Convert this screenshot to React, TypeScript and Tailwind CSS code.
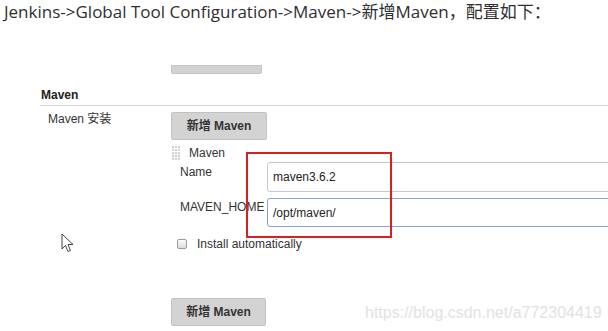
export default function App() {
  const sans = { fontFamily: '"Liberation Sans", "Noto Sans CJK SC", sans-serif' };

  return (
    <div className="relative w-[608px] h-[331px] overflow-hidden bg-white text-[#333]" style={sans}>
      {/* Article sentence above the screenshot */}
      <div
        className="pl-[4px] text-[17px] leading-[24px] text-[#2f2f2f] whitespace-nowrap"
        style={{ fontFamily: '"Open Sans", "Noto Sans CJK SC", sans-serif' }}
      >
        Jenkins-&gt;Global Tool Configuration-&gt;Maven-&gt;新增Maven，配置如下：
      </div>

      {/* Leftover button bottom from previous section */}
      <div className="ml-[171px] mt-[41px] w-[91px] h-[9px] bg-[#d2d2d2] border border-[#c4c4c4] rounded-b-[2px]" />

      {/* Section header */}
      <div className="ml-[40px] mt-[13px] pl-[1px] pb-[2px] border-b border-[#d6d6d6] text-[12px] leading-[16px] font-bold text-[#222]">
        Maven
      </div>

      <div className="flex">
        <div className="w-[123px] shrink-0 ml-[48px] pt-[5px] text-[12px] leading-[16px] text-[#333]">Maven 安装</div>

        <div className="flex flex-col shrink-0">
          <button className="mt-[6px] w-[96px] h-[28px] bg-[#d3d3d3] border border-[#c2c2c2] rounded-[2px] text-[12px] leading-[16px] font-bold text-[#333] flex items-center justify-center">
            新增 Maven
          </button>

          <div className="mt-[5px] h-[16px] flex items-center gap-[8px] pl-[1px] text-[12px] leading-[16px]">
            <svg width="9" height="14" viewBox="0 0 9 14" className="shrink-0">
              {[0, 3, 6].map((x) =>
                [0, 3, 6, 9, 12].map((y) => (
                  <rect key={`${x}-${y}`} x={x} y={y} width="2" height="2" fill="#cfcfcf" />
                ))
              )}
            </svg>
            <span className="text-[#333]">Maven</span>
          </div>

          {/* Fields */}
          <div className="mt-[1px] flex flex-col gap-[6px]">
            <div className="flex items-start">
              <div className="w-[96px] shrink-0 pl-[9px] pt-[2px] text-[12px] leading-[16px]">Name</div>
              <div className="w-[360px] shrink-0 h-[30px] border border-[#c6c6c6] rounded-[3px] flex items-center pl-[5px] text-[12px] text-[#222]">
                maven3.6.2
              </div>
            </div>
            <div className="flex items-start">
              <div className="w-[96px] shrink-0 pl-[9px] pt-[1px] text-[12px] leading-[16px] whitespace-nowrap">MAVEN_HOME</div>
              <div className="w-[360px] shrink-0 h-[29px] border border-[#8c9edb] rounded-[3px] flex items-center pl-[5px] text-[12px] text-[#222]">
                /opt/maven/
              </div>
            </div>
          </div>

          <div className="mt-[10px] flex items-center gap-[10px] pl-[6px] text-[12px] leading-[14px]">
            <div className="w-[10px] h-[10px] shrink-0 rounded-[2px] border border-[#9a9a9a] bg-gradient-to-b from-[#fdfdfd] to-[#dcdcdc]" />
            <span className="text-[#333]">Install automatically</span>
          </div>

          <button className="mt-[47px] w-[95px] h-[28px] bg-[#d3d3d3] border border-[#c2c2c2] rounded-[2px] text-[12px] leading-[16px] font-bold text-[#333] flex items-center justify-center">
            新增 Maven
          </button>
        </div>
      </div>

      {/* Red annotation box */}
      <div className="absolute left-[246px] top-[152px] w-[146px] h-[86px] border-2 border-[#d8201e]" />

      {/* Mouse cursor */}
      <svg className="absolute left-[61px] top-[233px]" width="15" height="21" viewBox="0 0 15 21">
        <path
          d="M1 1 L1 16 L4.5 12.5 L7 18.5 L9.5 17.5 L7 11.5 L12 11.5 Z"
          fill="#fff"
          stroke="#444"
          strokeWidth="1"
          strokeLinejoin="round"
        />
      </svg>

      {/* Watermark */}
      <div className="absolute left-[365px] top-[305px] text-[16px] leading-[16px] text-[#e2e2e2] whitespace-nowrap">
        https://blog.csdn.net/a772304419
      </div>
    </div>
  );
}
